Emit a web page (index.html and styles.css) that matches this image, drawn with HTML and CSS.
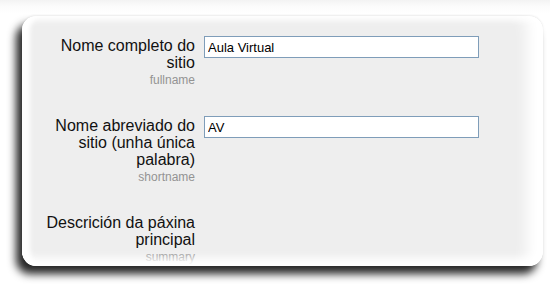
FILE: index.html
```html
<!DOCTYPE html>
<html lang="gl">
<head>
<meta charset="utf-8">
<title>Configuración do sitio</title>
<link rel="stylesheet" href="styles.css">
</head>
<body>
<div class="page">
  <div class="card">
    <form class="form">
      <div class="label">
        <span class="label-text">Nome completo do sitio</span>
        <span class="desc">fullname</span>
      </div>
      <div class="field"><input class="input" type="text" value="Aula Virtual"></div>

      <div class="label">
        <span class="label-text">Nome abreviado do sitio (unha única palabra)</span>
        <span class="desc">shortname</span>
      </div>
      <div class="field"><input class="input" type="text" value="AV"></div>

      <div class="label">
        <span class="label-text">Descrición da páxina principal</span>
        <span class="desc">summary</span>
      </div>
      <div class="field"></div>
    </form>
  </div>
</div>
</body>
</html>
```

FILE: styles.css
```css
html, body {
  margin: 0;
  padding: 0;
  background: #ffffff;
}

body {
  width: 550px;
  height: 291px;
  overflow: hidden;
  font-family: "Liberation Sans", Arial, sans-serif;
}

.page {
  padding: 16px 7px 25px 22px;
  background: linear-gradient(#f3f3f3 0, #fbfbfb 6px, #ffffff 14px);
  height: 291px;
  box-sizing: border-box;
}

.card {
  position: relative;
  height: 250px;
  background: #eeeeee;
  border-radius: 14px;
  overflow: hidden;
  box-shadow: -6px 8px 8px rgba(0, 0, 0, 0.85), 0 -1px 2px rgba(0, 0, 0, 0.06);
}

.card::after {
  content: "";
  position: absolute;
  inset: 0;
  border-radius: 14px;
  pointer-events: none;
  box-shadow:
    inset 10px 0 5px -2px #ffffff,
    inset 0 4px 7px 0 #ffffff,
    inset -22px 0 14px -6px #ffffff,
    inset 0 -8px 9px 0 #ffffff;
}

.form {
  display: grid;
  grid-template-columns: 160px 275px;
  column-gap: 9px;
  row-gap: 29px;
  padding: 20px 0 0 13px;
}

.label {
  display: flex;
  flex-direction: column;
  align-items: flex-end;
  text-align: right;
  padding-top: 1px;
}

.label-text {
  font-size: 16px;
  line-height: 17px;
  color: #111111;
}

.desc {
  font-size: 12px;
  line-height: 14px;
  margin-top: 2px;
  color: #939393;
}

.input {
  display: block;
  width: 275px;
  height: 22px;
  box-sizing: border-box;
  margin: 0;
  padding: 0 3px;
  border: 1px solid #7f9db9;
  background: #ffffff;
  font-family: "Liberation Sans", Arial, sans-serif;
  font-size: 13px;
  color: #000000;
  outline: none;
}
```
